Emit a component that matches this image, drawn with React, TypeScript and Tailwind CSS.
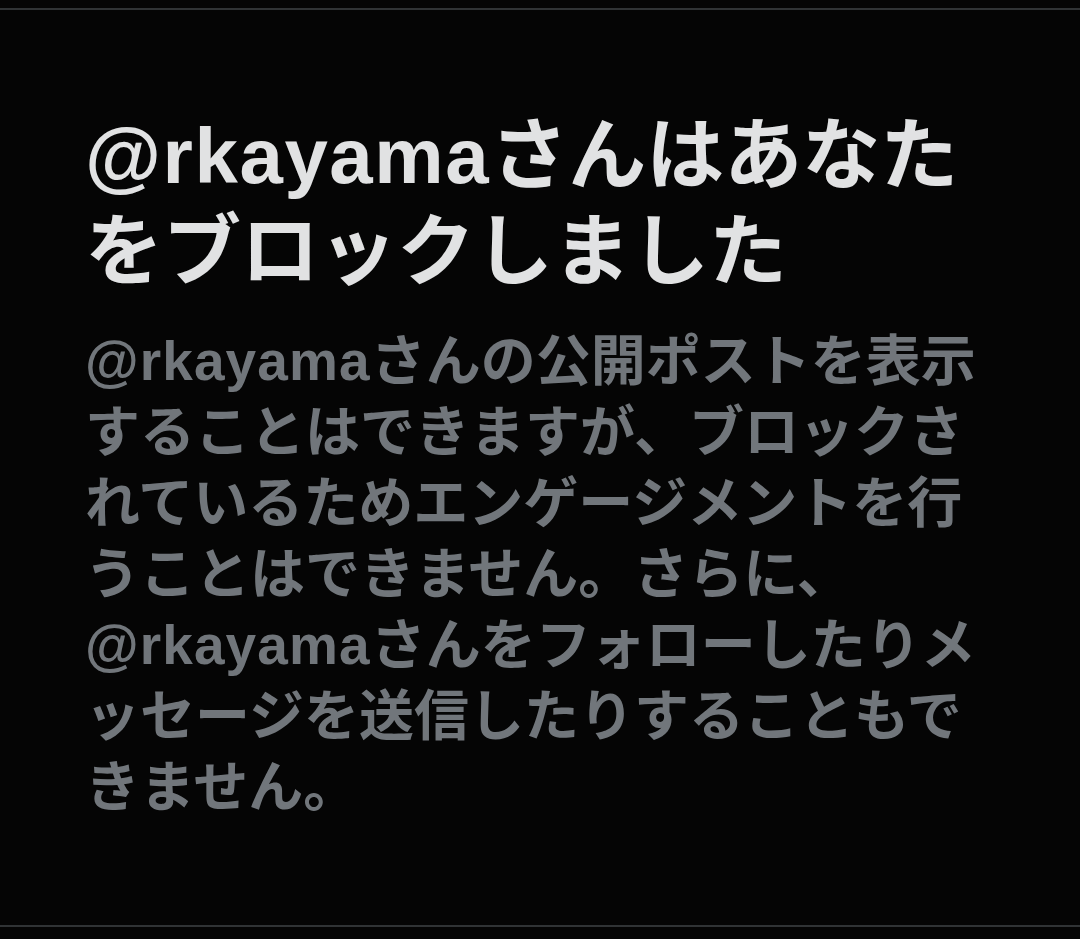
const handle = '@rkayama';

const Handle = () => <span className="tracking-[0.02em]">{handle}</span>;

const BlockedNotice = () => {
  return (
    <div className="px-[85px] pt-[98px]">
      <h1 className="text-[78px] leading-[96px] font-bold text-[#e1e2e3] [font-family:'Liberation_Sans','Noto_Sans_CJK_JP',sans-serif]">
        <Handle />さんはあなたをブロックしました
      </h1>
      <p className="mt-[26px] text-[55px] leading-[71px] font-bold text-[#71767b] [font-family:'Liberation_Sans','Noto_Sans_CJK_JP',sans-serif]">
        <Handle />さんの公開ポストを表示することはできますが、ブロックされているためエンゲージメントを行うことはできません。さらに、<Handle />さんをフォローしたりメッセージを送信したりすることもできません。
      </p>
    </div>
  );
};

export default function App() {
  return (
    <div className="h-[939px] w-[1080px] bg-[#050505] overflow-hidden flex flex-col">
      <div className="mt-[8px] h-[2px] bg-[#303335]" />
      <div className="flex-1">
        <BlockedNotice />
      </div>
      <div className="mb-[12px] h-[2px] bg-[#303335]" />
    </div>
  );
}
